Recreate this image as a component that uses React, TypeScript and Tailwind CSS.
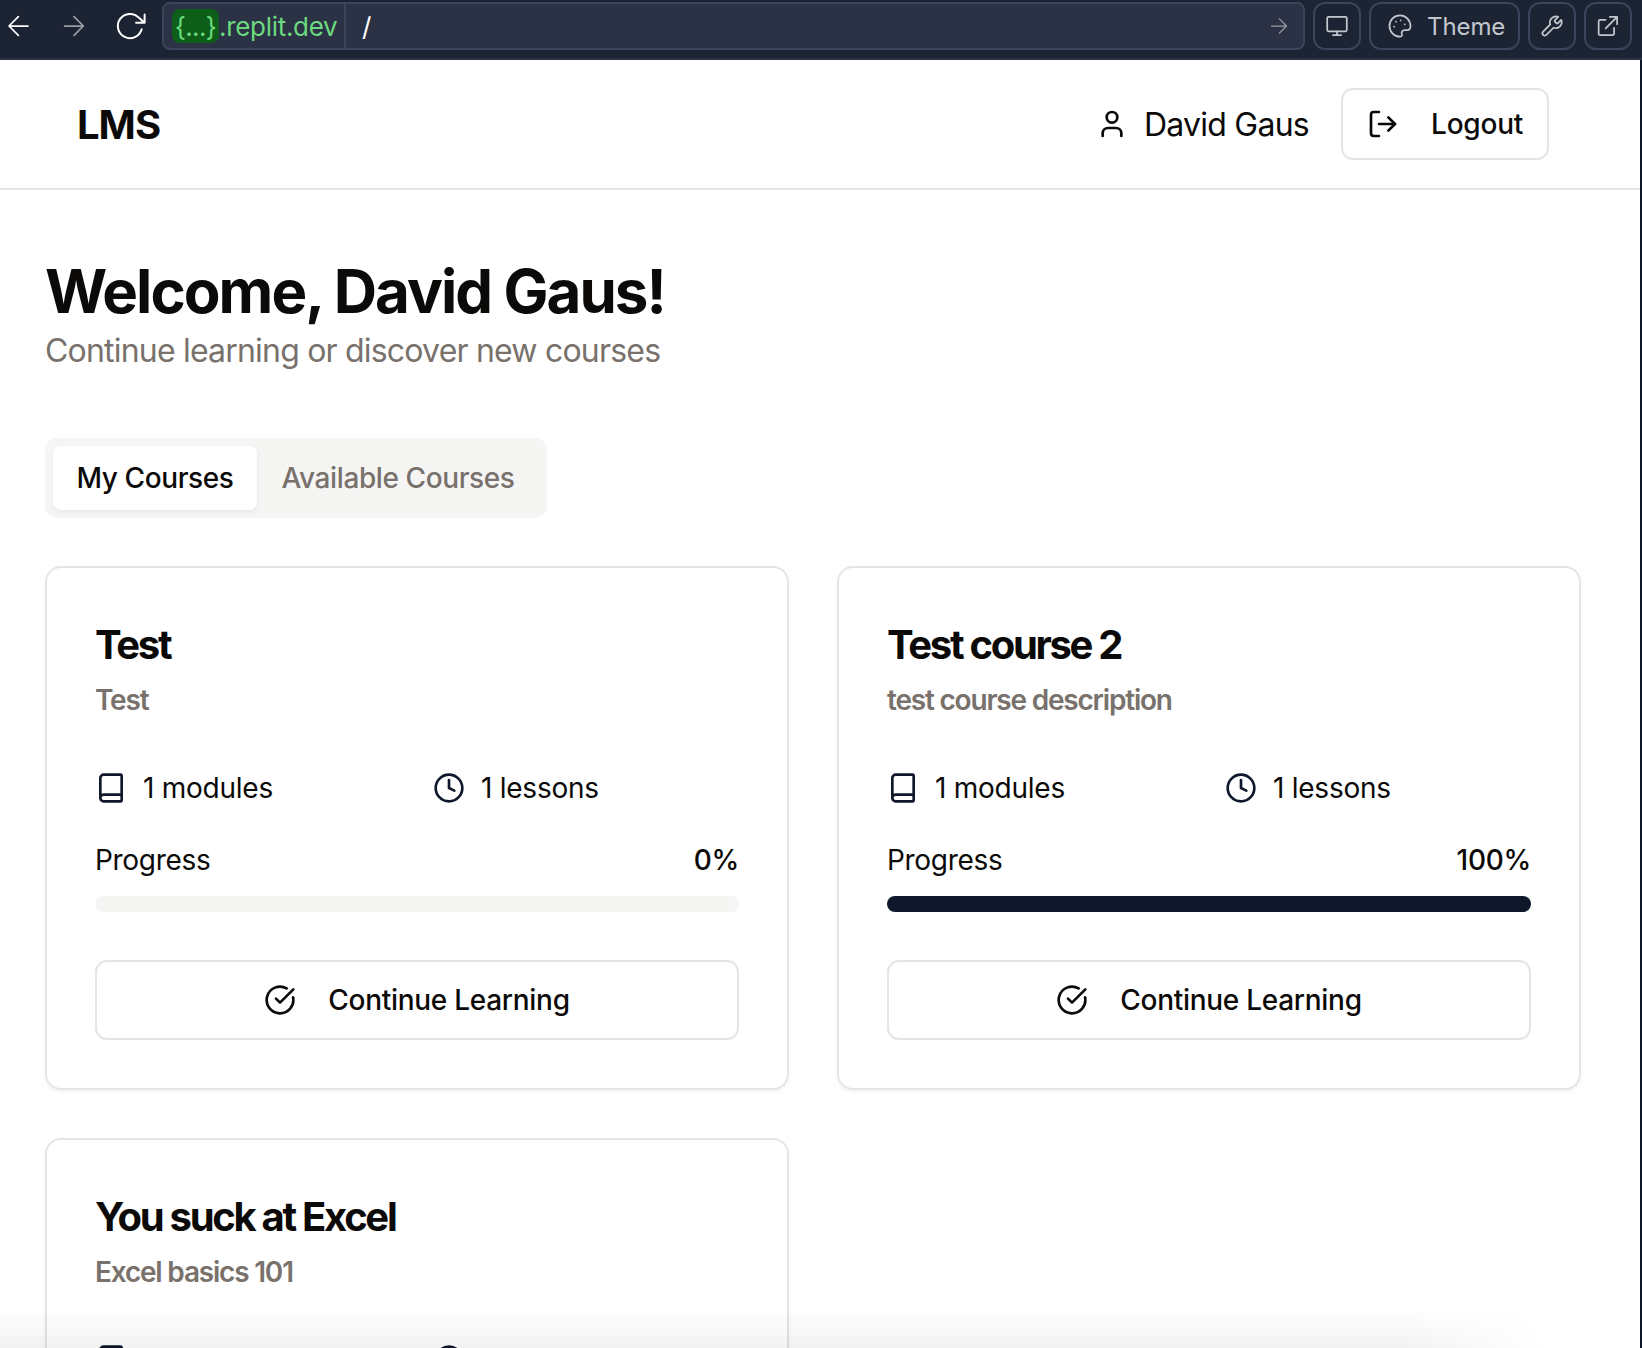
import React from "react";
import { Book, Clock, CircleCheckBig, LogOut, User } from "lucide-react";

type Course = { title: string; description: string; modules: number; lessons: number; progress: number };

const courses: Course[] = [
  { title: "Test", description: "Test", modules: 1, lessons: 1, progress: 0 },
  { title: "Test course 2", description: "test course description", modules: 1, lessons: 1, progress: 100 },
  { title: "You suck at Excel", description: "Excel basics 101", modules: 1, lessons: 1, progress: 0 },
];

function Glyph({ children, className }: { children: React.ReactNode; className: string }) {
  return (
    <svg viewBox="0 0 24 24" fill="none" stroke="currentColor" strokeWidth="1.5" strokeLinecap="round" strokeLinejoin="round" className={"shrink-0 " + className}>
      {children}
    </svg>
  );
}

function ToolButton({ children, className = "w-12 justify-center" }: { children: React.ReactNode; className?: string }) {
  return (
    <button className={"flex h-12 shrink-0 items-center rounded-xl border-2 border-[#3c445c] text-[#c2c8cc] " + className}>
      {children}
    </button>
  );
}

function BrowserBar() {
  return (
    <div className="flex h-[60px] items-start border-b-2 border-[#2b3245] bg-[#1c2333] pt-0.5 pr-2.5">
      <div className="flex h-12 w-[162px] shrink-0 items-center text-white">
        <Glyph className="ml-[4px] size-7"><path d="M20.5 12h-16M12.300 4 4.300 12l8 8" /></Glyph>
        <Glyph className="ml-7 size-7 text-[#9a9da3]"><path d="M4 12h16M12 4l8 8-8 8" /></Glyph>
        <Glyph className="ml-[27px] size-8"><path d="M22.200 3.300v6.300H15.800M20 14.500A9.100 9.100 0 1 1 17.800 5.700L21.900 9.400" /></Glyph>
      </div>
      <div className="flex h-12 flex-1 items-center rounded-lg border-2 border-[#3c445c] bg-[#2b3245] text-[26px] tracking-[-0.3px]">
        <div className="flex h-full w-[182px] items-center border-r-2 border-[#3c445c] pl-2 text-[#6cd97e]">
          <span className="flex h-[34px] w-[47px] items-center justify-center rounded-lg bg-[#0c5e18] tracking-[-0.6px]">{"{...}"}</span>
          <span className="pt-px">.replit.dev</span>
        </div>
        <span className="ml-4 flex-1 text-white">/</span>
        <Glyph className="mr-[14px] size-5 text-[#9a9da3]"><path d="M3 12h18M12.500 3.500 21 12l-8.500 8.500" /></Glyph>
      </div>
      <div className="ml-2 flex gap-2">
        <ToolButton>
          <Glyph className="size-7"><rect x="3.600" y="4.100" width="16.800" height="12.400" rx="1.200" /><path d="M12 16.500v3.300M8.500 19.800h7" /></Glyph>
        </ToolButton>
        <ToolButton className="w-[151px] gap-[13px] pl-[15px]">
          <Glyph className="size-7">
            <path d="M12 2.900a9 9 0 0 0-9 9c0 5.200 4.200 9.200 9 9.200 1.600 0 2-1 1.600-2-.6-1.900.3-3.500 2.300-3.500h2.100c1.900 0 3-1.300 3-3.300C21 7 17 2.900 12 2.900Z" />
            <path d="M6.900 12.600h.01M8.600 8.300h.01M12.600 7.100h.01M16.100 10.600h.01" />
          </Glyph>
          <span className="pt-0.5 text-[24px] tracking-[-0.1px]">Theme</span>
        </ToolButton>
        <ToolButton>
          <Glyph className="size-7"><path d="M14.500 6.900a1 1 0 0 0 0 1.400l1.200 1.200a1 1 0 0 0 1.400 0l2.800-2.800a5.200 5.200 0 0 1-6.600 6.800l-6.100 6.100a1.900 1.900 0 0 1-2.800-2.800l6.100-6.100a5.200 5.200 0 0 1 6.800-6.600z" /></Glyph>
        </ToolButton>
        <ToolButton>
          <Glyph className="size-7"><path d="M13.600 4.200h6.200v6.200M10 14 19.600 4.400M17.200 13.600v5a1.200 1.200 0 0 1-1.200 1.200H5.200A1.200 1.200 0 0 1 4 18.600V8A1.200 1.200 0 0 1 5.200 6.800h4.600" /></Glyph>
        </ToolButton>
      </div>
    </div>
  );
}

function CourseCard({ course }: { course: Course }) {
  return (
    <article className="h-[524px] rounded-2xl border-2 border-[#e5e5e5] bg-white p-12 shadow-[0_2px_4px_rgba(0,0,0,0.05)]">
      <h3 className="mt-[9px] text-[40px] leading-[40px] font-bold tracking-[-2.3px]">{course.title}</h3>
      <p className="mt-[15px] text-[28px] leading-[40px] font-semibold tracking-[-1.2px] text-[#78716c]">{course.description}</p>
      <div className="mt-12 grid grid-cols-2 gap-8 text-[28px] leading-[40px] tracking-[-0.25px]">
        <div className="flex items-center gap-4">
          <Book className="size-8 text-[#0f172a]" />
          <span>{course.modules} modules</span>
        </div>
        <div className="flex items-center gap-4">
          <Clock className="size-8 text-[#0f172a]" />
          <span>{course.lessons} lessons</span>
        </div>
      </div>
      <div className="mt-8 flex justify-between text-[28px] leading-[40px] tracking-[-0.3px]">
        <span>Progress</span>
        <span className="font-medium">{course.progress}%</span>
      </div>
      <div className="mt-4 h-4 overflow-hidden rounded-full bg-[#f5f5f4]">
        <div className="h-full bg-[#0f172a]" style={{ width: `${course.progress}%` }} />
      </div>
      <button className="mt-12 flex h-20 w-full items-center justify-center gap-8 rounded-xl border-2 border-[#e5e5e5] text-[28px] font-medium tracking-[-0.28px]">
        <CircleCheckBig className="size-8" />
        Continue Learning
      </button>
    </article>
  );
}

export default function App() {
  return (
    <div className="relative h-[1348px] w-[1642px] overflow-hidden bg-white font-['Inter',sans-serif] text-[#0c0a09]">
      <BrowserBar />
      <div className="h-[1288px] border-r-2 border-[#0e1525]">
        <header className="flex h-[130px] items-center justify-between border-b-2 border-[#e5e5e5] pr-[91px] pl-[77px]">
          <div className="pt-0.5 text-[40px] font-bold tracking-[-1px]">LMS</div>
          <div className="flex items-center gap-8">
            <div className="flex items-center gap-4 text-[32px] tracking-[-0.75px]">
              <User className="size-8" />
              <span className="pt-0.5">David Gaus</span>
            </div>
            <button className="flex h-[72px] w-[208px] items-center gap-8 rounded-xl border-2 border-[#e5e5e5] pl-6 text-[28px] font-medium tracking-[-0.2px]">
              <LogOut className="size-8" />
              Logout
            </button>
          </div>
        </header>
        <main className="w-[1581px] pt-[65px] pl-[45px]">
          <h1 className="text-[60px] leading-[72px] font-bold tracking-[-1.95px]">Welcome, David Gaus!</h1>
          <p className="text-[32px] leading-[48px] tracking-[-0.8px] text-[#78716c]">Continue learning or discover new courses</p>
          <div className="mt-[63px] flex h-20 w-[502px] items-center rounded-xl bg-[#f5f5f4] p-2 text-[28px] font-medium tracking-[-0.4px]">
            <div className="flex h-16 w-[204px] items-center justify-center rounded-lg bg-white shadow-[0_2px_4px_rgba(0,0,0,0.05)]">My Courses</div>
            <div className="flex h-16 flex-1 items-center justify-center text-[#78716c]">Available Courses</div>
          </div>
          <div className="mt-12 grid grid-cols-2 gap-12">
            {courses.map((course) => (
              <CourseCard key={course.title} course={course} />
            ))}
          </div>
        </main>
      </div>
      <div className="pointer-events-none absolute inset-x-0 bottom-0 h-10 bg-linear-to-b from-transparent to-black/5 [mask-image:linear-gradient(to_right,black_1400px,transparent_1545px)]" />
    </div>
  );
}
